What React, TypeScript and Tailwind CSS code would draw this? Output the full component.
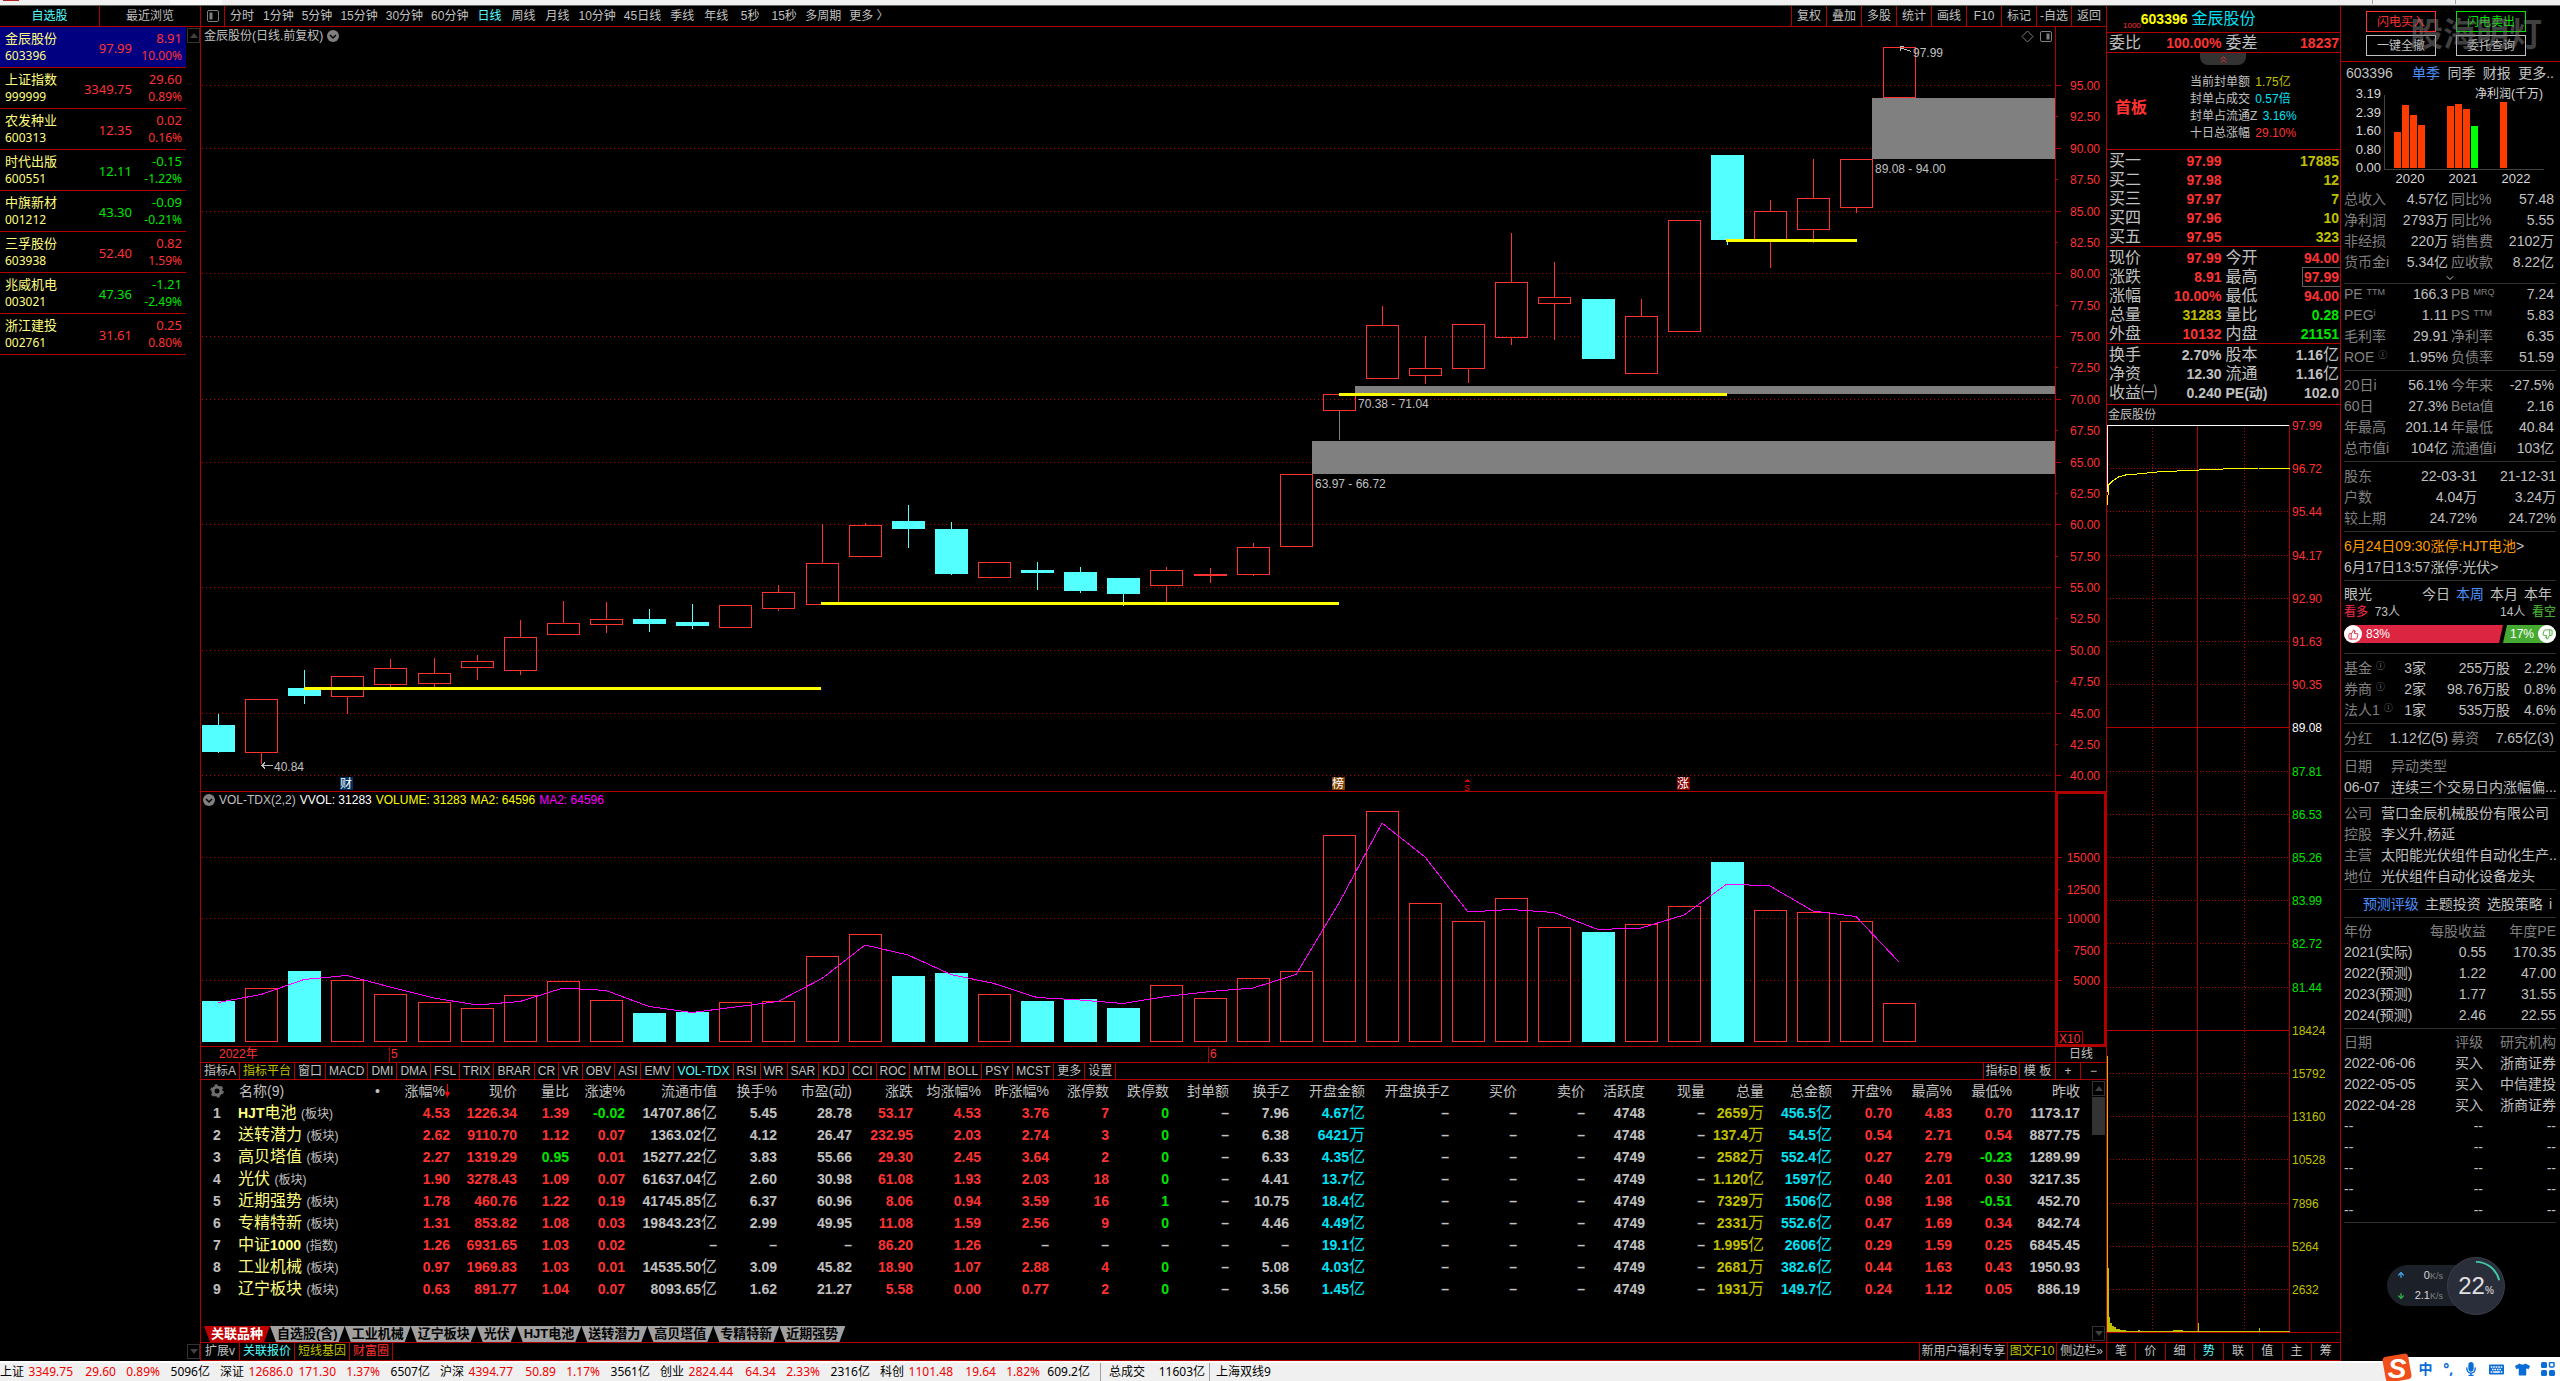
import { Fragment, type ReactNode } from 'react'
import clsx from 'clsx'
import { ThumbsUp, ThumbsDown, ChevronDown, ChevronsUp, ArrowUp, ArrowDown } from 'lucide-react'
import { FaKeyboard, FaMicrophone, FaTshirt } from 'react-icons/fa'

const RED = 'text-[#ff3232]'
const GREEN = 'text-[#00e600]'
const CYAN = 'text-[#02e2f4]'
const GOLD = 'text-[#c0c000]'
const GRAY = 'text-[#c0c0c0]'

/* ---------- data ---------- */

const WATCHLIST = [
  ['金辰股份', '603396', '97.99', '8.91', '10.00%'],
  ['上证指数', '999999', '3349.75', '29.60', '0.89%'],
  ['农发种业', '600313', '12.35', '0.02', '0.16%'],
  ['时代出版', '600551', '12.11', '-0.15', '-1.22%'],
  ['中旗新材', '001212', '43.30', '-0.09', '-0.21%'],
  ['三孚股份', '603938', '52.40', '0.82', '1.59%'],
  ['兆威机电', '003021', '47.36', '-1.21', '-2.49%'],
  ['浙江建投', '002761', '31.61', '0.25', '0.80%'],
]

const PERIODS = [
  '分时', '1分钟', '5分钟', '15分钟', '30分钟', '60分钟', '日线', '周线', '月线',
  '10分钟', '45日线', '季线', '年线', '5秒', '15秒', '多周期', '更多 〉',
]

const TOOLS = ['复权', '叠加', '多股', '统计', '画线', 'F10', '标记', '-自选', '返回']

// [rising, body top, body bottom, high, low, volume top]
const CANDLES: [boolean, number, number, number, number, number][] = [
  [false, 725, 752, 714, 753, 1001],
  [true, 699, 752, 699, 764, 988],
  [false, 688, 696, 670, 704, 971],
  [true, 676, 696, 676, 714, 980],
  [true, 668, 684, 659, 687, 994],
  [true, 673, 683, 658, 687, 1002],
  [true, 661, 667, 655, 680, 1008],
  [true, 637, 670, 620, 675, 995],
  [true, 623, 634, 601, 635, 981],
  [true, 619, 624, 602, 633, 1000],
  [false, 619, 624, 609, 632, 1013],
  [false, 622, 626, 604, 629, 1012],
  [true, 605, 627, 605, 627, 1002],
  [true, 592, 608, 585, 611, 1001],
  [true, 563, 604, 524, 605, 956],
  [true, 525, 556, 523, 557, 934],
  [false, 521, 529, 505, 548, 976],
  [false, 529, 574, 522, 575, 973],
  [true, 562, 577, 562, 578, 994],
  [false, 570, 573, 562, 590, 1001],
  [false, 572, 591, 567, 593, 999],
  [false, 578, 594, 578, 606, 1008],
  [true, 570, 585, 567, 603, 985],
  [true, 574, 575, 568, 583, 998],
  [true, 547, 574, 543, 576, 978],
  [true, 474, 546, 474, 546, 971],
  [true, 394, 410, 394, 440, 835],
  [true, 325, 378, 306, 378, 811],
  [true, 368, 375, 336, 384, 903],
  [true, 324, 368, 324, 383, 921],
  [true, 282, 337, 233, 345, 898],
  [true, 297, 303, 262, 340, 927],
  [false, 299, 359, 299, 359, 932],
  [true, 316, 373, 299, 373, 924],
  [true, 220, 331, 220, 332, 906],
  [false, 155, 240, 155, 245, 862],
  [true, 211, 240, 200, 268, 910],
  [true, 198, 229, 159, 243, 912],
  [true, 159, 207, 159, 213, 921],
  [true, 47, 97, 47, 97, 1003],
]

const candleX = (i: number) => Math.round(218 + i * 43.11)
const priceY = (p: number) => Math.round(85 + (95 - p) * 12.55)

const PRICE_TICKS = Array.from({ length: 23 }, (_, i) => 95 - i * 2.5)
const VOLUME_TICKS: [string, number][] = [
  ['15000', 857], ['12500', 889], ['10000', 918], ['7500', 950], ['5000', 980],
]

const SUPPORT_LINES = [
  [304, 821, 688],
  [821, 1339, 603],
  [1339, 1727, 394],
  [1726, 1857, 240],
]

const GAPS: [number, number, number, string][] = [
  [1872, 98, 159, '89.08 - 94.00'],
  [1355, 386, 394, '70.38 - 71.04'],
  [1312, 441, 474, '63.97 - 66.72'],
]

const INDICATORS = [
  '指标A', '指标平台', '窗口', 'MACD', 'DMI', 'DMA', 'FSL', 'TRIX', 'BRAR', 'CR', 'VR', 'OBV', 'ASI', 'EMV',
  'VOL-TDX', 'RSI', 'WR', 'SAR', 'KDJ', 'CCI', 'ROC', 'MTM', 'BOLL', 'PSY', 'MCST', '更多', '设置',
]

const COLUMNS: [string, string, string][] = [
  ['涨幅%', 'w-[70px]', 'sign'],
  ['现价', 'w-[67px]', 'red'],
  ['量比', 'w-[52px]', 'ratio'],
  ['涨速%', 'w-[56px]', 'sign'],
  ['流通市值', 'w-[92px]', 'gray'],
  ['换手%', 'w-[60px]', 'gray'],
  ['市盈(动)', 'w-[75px]', 'gray'],
  ['涨跌', 'w-[61px]', 'sign'],
  ['均涨幅%', 'w-[68px]', 'sign'],
  ['昨涨幅%', 'w-[68px]', 'sign'],
  ['涨停数', 'w-[60px]', 'red'],
  ['跌停数', 'w-[60px]', 'green'],
  ['封单额', 'w-[60px]', 'gray'],
  ['换手Z', 'w-[60px]', 'gray'],
  ['开盘金额', 'w-[76px]', 'cyan'],
  ['开盘换手Z', 'w-[84px]', 'gray'],
  ['买价', 'w-[68px]', 'gray'],
  ['卖价', 'w-[68px]', 'gray'],
  ['活跃度', 'w-[60px]', 'gray'],
  ['现量', 'w-[60px]', 'gray'],
  ['总量', 'w-[59px]', 'gold'],
  ['总金额', 'w-[68px]', 'cyan'],
  ['开盘%', 'w-[60px]', 'sign'],
  ['最高%', 'w-[60px]', 'sign'],
  ['最低%', 'w-[60px]', 'sign'],
  ['昨收', 'w-[68px]', 'gray'],
]

const SECTORS: [string, string, string][] = [
  ['HJT电池', '板块', '4.53 1226.34 1.39 -0.02 14707.86亿 5.45 28.78 53.17 4.53 3.76 7 0 – 7.96 4.67亿 – – – 4748 – 2659万 456.5亿 0.70 4.83 0.70 1173.17'],
  ['送转潜力', '板块', '2.62 9110.70 1.12 0.07 1363.02亿 4.12 26.47 232.95 2.03 2.74 3 0 – 6.38 6421万 – – – 4748 – 137.4万 54.5亿 0.54 2.71 0.54 8877.75'],
  ['高贝塔值', '板块', '2.27 1319.29 0.95 0.01 15277.22亿 3.83 55.66 29.30 2.45 3.64 2 0 – 6.33 4.35亿 – – – 4749 – 2582万 552.4亿 0.27 2.79 -0.23 1289.99'],
  ['光伏', '板块', '1.90 3278.43 1.09 0.07 61637.04亿 2.60 30.98 61.08 1.93 2.03 18 0 – 4.41 13.7亿 – – – 4749 – 1.120亿 1597亿 0.40 2.01 0.30 3217.35'],
  ['近期强势', '板块', '1.78 460.76 1.22 0.19 41745.85亿 6.37 60.96 8.06 0.94 3.59 16 1 – 10.75 18.4亿 – – – 4749 – 7329万 1506亿 0.98 1.98 -0.51 452.70'],
  ['专精特新', '板块', '1.31 853.82 1.08 0.03 19843.23亿 2.99 49.95 11.08 1.59 2.56 9 0 – 4.46 4.49亿 – – – 4749 – 2331万 552.6亿 0.47 1.69 0.34 842.74'],
  ['中证1000', '指数', '1.26 6931.65 1.03 0.02 – – – 86.20 1.26 – – – – – 19.1亿 – – – 4748 – 1.995亿 2606亿 0.29 1.59 0.25 6845.45'],
  ['工业机械', '板块', '0.97 1969.83 1.03 0.01 14535.50亿 3.09 45.82 18.90 1.07 2.88 4 0 – 5.08 4.03亿 – – – 4749 – 2681万 382.6亿 0.44 1.63 0.43 1950.93'],
  ['辽宁板块', '板块', '0.63 891.77 1.04 0.07 8093.65亿 1.62 21.27 5.58 0.00 0.77 2 0 – 3.56 1.45亿 – – – 4749 – 1931万 149.7亿 0.24 1.12 0.05 886.19'],
]

const GROUP_TABS = ['关联品种', '自选股(含)', '工业机械', '辽宁板块', '光伏', 'HJT电池', '送转潜力', '高贝塔值', '专精特新', '近期强势']

const INDICES = [
  ['上证', '3349.75', '29.60', '0.89%', '5096亿'],
  ['深证', '12686.0', '171.30', '1.37%', '6507亿'],
  ['沪深', '4394.77', '50.89', '1.17%', '3561亿'],
  ['创业', '2824.44', '64.34', '2.33%', '2316亿'],
  ['科创', '1101.48', '19.64', '1.82%', '609.2亿'],
]

const INTRADAY_LABELS = [
  '97.99', '96.72', '95.44', '94.17', '92.90', '91.63', '90.35', '89.08', '87.81', '86.53', '85.26',
  '83.99', '82.72', '81.44', '18424', '15792', '13160', '10528', '7896', '5264', '2632',
]

function toneOf(kind: string, value: string) {
  if (value === '–') return GRAY
  if (kind === 'sign') return value.startsWith('-') ? GREEN : RED
  if (kind === 'ratio') return Number(value) < 1 ? GREEN : RED
  if (kind === 'red') return RED
  if (kind === 'green') return GREEN
  if (kind === 'cyan') return CYAN
  if (kind === 'gold') return GOLD
  return GRAY
}

/* Digits are bold and small, the trailing unit is a full-size hanzi */
function Num({ value, className }: { value: string; className?: string }) {
  const unit = /[亿万]$/.test(value) ? value.slice(-1) : ''
  const digits = unit ? value.slice(0, -1) : value
  return (
    <span className={clsx('whitespace-nowrap', className)}>
      <span className="text-sm leading-4 font-bold">{digits}</span>
      {unit && <span className="text-base leading-4">{unit}</span>}
    </span>
  )
}

function ScrollArrow({ down = false }: { down?: boolean }) {
  return (
    <button aria-label={down ? '向下' : '向上'} className="flex h-[15px] w-[13px] items-center justify-center border border-[#333]">
      <svg width="8" height="5" viewBox="0 0 8 5" fill="#404040">
        <path d={down ? 'M0 0h8L4 5z' : 'M0 5h8L4 0z'} />
      </svg>
    </button>
  )
}

function RoundChevron() {
  return (
    <svg width="12" height="12" viewBox="0 0 12 12" fill="none">
      <circle cx="6" cy="6" r="6" fill="#808080" />
      <path d="M3 5l3 3 3-3" stroke="#000" strokeWidth="1.5" />
    </svg>
  )
}

/* ---------- left ---------- */

function Watchlist() {
  return (
    <aside className="flex w-[201px] shrink-0 flex-col border-r border-[#b00000]">
      <div className="flex h-[21px] border-b border-[#b00000] text-xs">
        <button className="w-[100px] border-r border-[#b00000] text-[#54ffff]">自选股</button>
        <button className="flex-1">最近浏览</button>
      </div>
      <div className="flex flex-1">
        <ul className="w-[186px] font-['Noto_Sans','Noto_Sans_CJK_SC',sans-serif]">
          {WATCHLIST.map(([name, code, price, diff, pct], i) => {
            const tone = diff.startsWith('-') ? GREEN : RED
            return (
              <li
                key={code}
                className={clsx('grid h-[41px] grid-cols-[65px_62px_1fr] items-center border-b border-[#b00000] pr-1 pl-[5px]', i === 0 && 'bg-[#000080]')}
              >
                <div className="text-[#ffff80]">
                  <div className="text-[13px] leading-[17px] whitespace-nowrap">{name}</div>
                  <div className="text-xs leading-[17px]">{code}</div>
                </div>
                <div className={clsx('pt-1 text-right text-[13px]', tone)}>{price}</div>
                <div className={clsx('text-right', tone)}>
                  <div className="text-[13px] leading-[17px]">{diff}</div>
                  <div className="text-xs leading-[17px]">{pct}</div>
                </div>
              </li>
            )
          })}
        </ul>
        <div className="flex flex-1 flex-col items-end justify-between pt-px pb-0.5">
          <ScrollArrow />
          <ScrollArrow down />
        </div>
      </div>
    </aside>
  )
}

/* ---------- centre ---------- */

function Toolbar() {
  return (
    <div className="flex h-[21px] items-stretch border-b border-[#b00000] text-xs">
      <button aria-label="侧栏" className="flex w-6 items-center justify-center border-r border-[#b00000]">
        <svg width="12" height="12" viewBox="0 0 12 12" fill="none" stroke="#808080">
          <rect x=".5" y=".5" width="11" height="11" rx="1.5" />
          <rect x="3" y="3" width="2" height="6" fill="#808080" />
        </svg>
      </button>
      <nav className="flex flex-1">
        {PERIODS.map((p) => (
          <button key={p} className={clsx('min-w-[34px] px-1 whitespace-nowrap', p === '日线' && 'text-[#54ffff]')}>
            {p}
          </button>
        ))}
      </nav>
      {TOOLS.map((t) => (
        <button key={t} className="w-[35px] border-l border-[#b00000] whitespace-nowrap">
          {t}
        </button>
      ))}
    </div>
  )
}

function Marker({ x, fill, label }: { x: number; fill: string; label: string }) {
  return (
    <g>
      <rect x={x} y="777" width="13" height="13" fill={fill} />
      <text x={x + 6} y="788" fill="#fff" fontSize="12" textAnchor="middle">{label}</text>
    </g>
  )
}

function PriceChart() {
  return (
    <div className="relative">
      <svg viewBox="201 27 1905 765" className="block h-auto w-full text-xs" shapeRendering="crispEdges">
        {PRICE_TICKS.map((p) => {
          const y = priceY(p)
          const major = p % 5 === 0
          return (
            <g key={p}>
              {major && <path d={`M202 ${y + 0.5}H2052`} stroke="#b00000" strokeDasharray="1 3" />}
              <path d={`M2056 ${y + 0.5}h${major ? 5 : 2}`} stroke="#b00000" />
              <text x="2100" y={y + 5} fill="#ff3232" fontSize="12" textAnchor="end">{p.toFixed(2)}</text>
            </g>
          )
        })}
        {GAPS.map(([x, top, bottom, label]) => (
          <g key={label}>
            <rect x={x} y={top} width={2055 - x} height={bottom - top} fill="#808080" />
            <text x={x + 3} y={bottom + 14} fill="#c0c0c0" fontSize="12">{label}</text>
          </g>
        ))}
        {CANDLES.map(([up, top, bottom, high, low], i) => {
          const cx = candleX(i)
          const color = up ? '#ff3232' : '#54ffff'
          return (
            <g key={i}>
              <rect x={cx} y={high} width="1" height={Math.max(top - high, 0)} fill={color} />
              <rect x={cx} y={bottom} width="1" height={Math.max(low - bottom, 0)} fill={i === 26 ? '#808080' : color} />
              {up ? (
                <rect x={cx - 15.5} y={top + 0.5} width="32" height={bottom - top} fill="none" stroke={color} />
              ) : (
                <rect x={cx - 16} y={top} width="33" height={bottom - top} fill={color} />
              )}
            </g>
          )
        })}
        {SUPPORT_LINES.map(([x1, x2, y]) => (
          <rect key={x1} x={x1} y={y - 1} width={x2 - x1} height="3" fill="#ff0" />
        ))}
        <path d="M1911 51.5l-11-4M1904 46.5h-4v4" fill="none" stroke="#c0c0c0" />
        <text x="1913" y="57" fill="#c0c0c0" fontSize="12">97.99</text>
        <path d="M273 765.5h-11M265 762.5l-3 3 3 3" fill="none" stroke="#c0c0c0" />
        <text x="274" y="771" fill="#c0c0c0" fontSize="12">40.84</text>
        <Marker x={340} fill="#003060" label="财" />
        <Marker x={1332} fill="#804000" label="榜" />
        <Marker x={1677} fill="#800000" label="涨" />
        <path d="M1464 782l3-3 3 3z" fill="#e00000" />
        <text x="1467" y="791" fill="#e00000" fontSize="11" textAnchor="middle">s</text>
        <path d="M2055.5 27V792M201 791.5H2106" stroke="#b00000" />
        <g fill="none" stroke="#808080" shapeRendering="auto">
          <path d="M2027.5 31l5.5 5.5-5.5 5.5-5.5-5.5z" />
          <rect x="2040.5" y="31.5" width="11" height="10" rx="1.5" />
          <rect x="2047" y="34" width="2" height="5" fill="#808080" />
        </g>
      </svg>
      <h1 className="absolute top-px left-[3px] flex items-center gap-1 text-xs leading-4">
        金辰股份(日线.前复权)
        <RoundChevron />
      </h1>
    </div>
  )
}

function VolumeChart() {
  const ma = CANDLES.map((c, i) => {
    const prev = i === 0 ? 1004 : CANDLES[i - 1][5]
    return `${candleX(i)},${(c[5] + prev) / 2}`
  }).join(' ')
  return (
    <div className="relative">
      <svg viewBox="201 792 1905 255" className="block h-auto w-full" shapeRendering="crispEdges">
        {VOLUME_TICKS.map(([label, y], i) => (
          <g key={label}>
            {i % 2 === 0 && <path d={`M202 ${y + 0.5}H2052`} stroke="#b00000" strokeDasharray="1 3" />}
            <path d={`M2058 ${y + 0.5}h${i % 2 === 0 ? 4 : 2}`} stroke="#b00000" />
            <text x="2100" y={y + 5} fill="#ff3232" fontSize="12" textAnchor="end">{label}</text>
          </g>
        ))}
        {CANDLES.map((c, i) =>
          c[0] ? (
            <rect key={i} x={candleX(i) - 15.5} y={c[5] + 0.5} width="32" height={1041 - c[5]} fill="none" stroke="#ff3232" />
          ) : (
            <rect key={i} x={candleX(i) - 16} y={c[5]} width="33" height={1042 - c[5]} fill="#54ffff" />
          ),
        )}
        <polyline points={ma} fill="none" stroke="#f0f" />
        <path d="M2055.5 792V1046M201 1046.5H2106" stroke="#b00000" />
        <rect x="2057" y="793" width="48" height="252" fill="none" stroke="#b00000" strokeWidth="2" />
        <path d="M2057 1031.5h25v14" fill="none" stroke="#b00000" />
        <text x="2059" y="1043" fill="#ff3232" fontSize="12">X10</text>
      </svg>
      <div className="absolute top-0 left-0.5 flex items-center gap-1 text-xs leading-4">
        <RoundChevron />
        <span>VOL-TDX(2,2)</span>
        <span className="text-white">VVOL: 31283</span>
        <span className="text-[#ff0]">VOLUME: 31283</span>
        <span className="text-[#ff0]">MA2: 64596</span>
        <span className="text-[#f0f]">MA2: 64596</span>
      </div>
    </div>
  )
}

function DateAxis() {
  return (
    <div className="flex h-4 border-b border-[#b00000] text-xs leading-[15px] text-[#ff3232]">
      <span className="w-[188px] pl-[18px]">2022年</span>
      <span className="w-[819px] border-l border-[#b00000] pl-px">5</span>
      <span className="flex-1 border-l border-[#b00000] pl-px">6</span>
      <span className="w-[51px] border-l border-[#b00000] text-center text-[#c0c0c0]">日线</span>
    </div>
  )
}

function IndicatorTabs() {
  return (
    <div className="flex h-[17px] border-b border-[#b00000] text-xs leading-4">
      {INDICATORS.map((name) => (
        <button
          key={name}
          className={clsx(
            'border-r border-[#b00000] px-[3px] whitespace-nowrap',
            name === '指标平台' && GOLD,
            name === 'VOL-TDX' && 'text-[#54ffff]',
          )}
        >
          {name}
        </button>
      ))}
      <div className="flex-1" />
      <button className="w-9 border-l border-[#b00000] whitespace-nowrap">指标B</button>
      <button className="w-9 border-l border-[#b00000] whitespace-nowrap">模 板</button>
      <button className="w-[25px] border-l border-[#b00000]">+</button>
      <button className="w-[26px] border-l border-[#b00000]">−</button>
    </div>
  )
}

function SectorTable() {
  return (
    <div className="flex h-[246px]">
      <table className="h-fit flex-1 table-fixed">
        <thead>
          <tr className="h-[22px] text-sm leading-4 whitespace-nowrap">
            <th className="w-8 font-normal">
              <svg width="14" height="14" viewBox="0 0 14 14" fill="none" stroke="#707070" className="mx-auto" role="img" aria-label="设置">
                <circle cx="7" cy="7" r="4" strokeWidth="3" />
                <circle cx="7" cy="7" r="6" strokeWidth="1.5" strokeDasharray="3 3.28" />
              </svg>
            </th>
            <th className="w-[147px] pl-1.5 text-left font-normal">
              <span className="flex justify-between">
                名称(9)<span>•</span>
              </span>
            </th>
            {COLUMNS.map(([label, width], i) => (
              <th key={label} className={clsx(width, 'text-right font-normal')}>
                {i === 0 ? (
                  <span className="flex items-center justify-end">
                    涨幅%
                    <svg width="5" height="14" viewBox="0 0 5 14">
                      <path d="M2 0h1v8h2l-2.500 6L0 8h2z" fill="#ff0000" />
                    </svg>
                  </span>
                ) : (
                  label
                )}
              </th>
            ))}
            <th />
          </tr>
        </thead>
        <tbody>
          {SECTORS.map(([name, kind, values], row) => (
            <tr key={name} className="h-[22px] leading-4 whitespace-nowrap">
              <td className={clsx('text-center text-sm font-bold', GRAY)}>{row + 1}</td>
              <td className="pl-[5px]">
                <span className="text-base leading-4 text-[#ffff80]">
                  {name.split(/([A-Z0-9]+)/).map((part, i) => (
                    <span key={i} className={clsx(/[A-Z0-9]/.test(part) && 'text-sm font-bold')}>{part}</span>
                  ))}
                </span>{' '}
                <span className="text-xs">({kind})</span>
              </td>
              {values.split(' ').map((v, i) => (
                <td key={i} className="text-right">
                  <Num value={v} className={toneOf(COLUMNS[i][2], v)} />
                </td>
              ))}
              <td />
            </tr>
          ))}
        </tbody>
      </table>
      <div className="flex w-3.5 flex-col items-start py-px">
        <ScrollArrow />
        <div className="mt-px h-[38px] w-[13px] bg-[#333]" />
      </div>
    </div>
  )
}

function GroupTabs() {
  return (
    <div className="flex h-[17px] items-start justify-between border-b border-[#b00000] pl-[3px]">
      <div className="flex">
        {GROUP_TABS.map((name, i) => (
          <button
            key={name}
            className={clsx(
              'h-4 px-[7px] text-[13px] leading-4 font-bold whitespace-nowrap [clip-path:polygon(0_0,100%_0,calc(100%-6px)_100%,6px_100%)]',
              i === 0 ? 'bg-[#c00000] text-white' : 'bg-[#a0a0a0] text-black',
            )}
          >
            {name}
          </button>
        ))}
      </div>
      <div className="w-3.5">
        <ScrollArrow down />
      </div>
    </div>
  )
}

function LinkBar() {
  return (
    <div className="flex h-[18px] border-b border-[#b00000] text-xs leading-[17px] whitespace-nowrap">
      <button className="border-r border-[#b00000] px-1">扩展v</button>
      <button className="border-r border-[#b00000] px-[3px] text-[#54ffff]">关联报价</button>
      <button className={clsx('border-r border-[#b00000] px-[3px]', GOLD)}>短线基因</button>
      <button className={clsx('border-r border-[#b00000] px-[3px]', RED)}>财富圈</button>
      <div className="flex-1" />
      <button className="w-[88px] border-l border-[#b00000]">新用户福利专享</button>
      <button className={clsx('w-[49px] border-l border-[#b00000]', GOLD)}>图文F10</button>
      <button className="w-[50px] border-l border-[#b00000]">侧边栏»</button>
    </div>
  )
}

/* ---------- quote column ---------- */

type Pair = [string, string, string, string?, string?, string?]

const BIDS: Pair[] = [
  ['买一', '97.99', RED, '', '17885', GOLD],
  ['买二', '97.98', RED, '', '12', GOLD],
  ['买三', '97.97', RED, '', '7', GOLD],
  ['买四', '97.96', RED, '', '10', GOLD],
  ['买五', '97.95', RED, '', '323', GOLD],
]
const QUOTE: Pair[] = [
  ['现价', '97.99', RED, '今开', '94.00', RED],
  ['涨跌', '8.91', RED, '最高', '97.99', RED],
  ['涨幅', '10.00%', RED, '最低', '94.00', RED],
  ['总量', '31283', GOLD, '量比', '0.28', GREEN],
  ['外盘', '10132', RED, '内盘', '21151', GREEN],
]
const CAPITAL: Pair[] = [
  ['换手', '2.70%', GRAY, '股本', '1.16亿', GRAY],
  ['净资', '12.30', GRAY, '流通', '1.16亿', GRAY],
  ['收益㈠', '0.240', GRAY, 'PE(动)', '102.0', GRAY],
]

function PairRow({ row: [a, av, at, b, bv = '', bt] }: { row: Pair }) {
  return (
    <div className="grid h-[19px] grid-cols-2 items-center text-base leading-[18px]">
      <div className="flex items-center justify-between px-0.5">
        <span>{a}</span>
        <Num value={av} className={at} />
      </div>
      <div className="flex items-center justify-between pl-0.5">
        <span className={clsx(b?.startsWith('PE') && 'text-sm font-bold')}>{b}</span>
        <Num value={bv} className={clsx(bt, 'px-px', b === '最高' && 'outline outline-[#606060]')} />
      </div>
    </div>
  )
}

const SEAL = [
  ['当前封单额', '1.75亿', GOLD],
  ['封单占成交', '0.57倍', CYAN],
  ['封单占流通Z', '3.16%', CYAN],
  ['十日总涨幅', '29.10%', RED],
]

function IntradayChart() {
  const step = 43.2
  const noise = [60, 34, 22, 18, 12, 9, 7, 8, 5, 4, 4, 3, 3, 2, 3, 5, 2, 1, 2, 1, 2, 1, 1, 2, 1, 3, 2, 2, 2]
  return (
    <svg viewBox="2107 425 233 917" className="block h-auto w-full overflow-visible" shapeRendering="crispEdges">
      {INTRADAY_LABELS.map((label, i) => {
        const y = Math.round(425 + i * step)
        const solid = i === 7 || i === 14
        const fill = i < 7 ? '#ff3232' : i === 7 ? '#fff' : i < 14 ? '#00e600' : '#c0c000'
        return (
          <g key={label}>
            {i > 0 && <path d={`M2107 ${y + 0.5}H2289`} stroke="#b00000" strokeDasharray={solid ? undefined : '1 2'} />}
            <text x="2292" y={y + 5} fill={fill} fontSize="12">{label}</text>
          </g>
        )
      })}
      <path d="M2152.500 425V1332M2244.500 425V1332" stroke="#b00000" strokeDasharray="1 2" />
      <path d="M2197.500 425V1332M2289.500 425V1332M2107 1332.500H2340" stroke="#b00000" />
      <path d="M2289 425.500H2107.500V492" fill="none" stroke="#fff" />
      <path d="M2107.500 505l1-20 4-4 6-4 7-2 12-1 20-2 20-1 22-1 24-1 35-1h31" fill="none" stroke="#ff0" />
      <path d="M2107.500 1056V1332M2108.500 1268V1332" stroke="#c0c000" />
      {noise.map((h, i) => (
        <rect key={i} x={2108 + i * 2} y={1332 - Math.ceil(h / 4)} width="2" height={Math.ceil(h / 4)} fill="#c0c000" />
      ))}
      <path d="M2107 1331.500H2290M2198.500 1323V1332M2259.500 1328V1332M2173 1330.500h10" stroke="#c0c000" />
    </svg>
  )
}

function QuotePanel() {
  return (
    <section className="flex w-[234px] shrink-0 flex-col border-l border-[#b00000]">
      <div className="flex h-[27px] items-center border-b border-[#b00000] pl-4 text-base">
        <span className={clsx('self-end text-[8px] leading-3', RED)}>1000</span>
        <span className="text-sm font-bold text-[#ffff00]">603396</span>
        <span className={clsx('pl-1', CYAN)}>金辰股份</span>
      </div>
      <div className="h-5 border-b border-[#b00000]">
        <PairRow row={['委比', '100.00%', RED, '委差', '18237', RED]} />
      </div>
      <div className="relative flex h-[97px] items-center border-b border-[#b00000] pt-[14px] pl-2">
        <button aria-label="收起" className="absolute top-0 left-[93px] flex h-3 w-[46px] items-center justify-center rounded-b-lg bg-[#333]">
          <ChevronsUp size={11} className={RED} />
        </button>
        <strong className={clsx('w-[75px] text-base', RED)}>首板</strong>
        <ul className="text-xs leading-[17px]">
          {SEAL.map(([label, value, tone]) => (
            <li key={label}>
              {label} <span className={clsx('pl-0.5', tone)}>{value}</span>
            </li>
          ))}
        </ul>
      </div>
      {[BIDS, QUOTE, CAPITAL].map((rows, i) => (
        <div key={i} className={clsx('border-b border-[#b00000] pt-px', i === 2 ? 'h-[61px]' : 'h-[97px]')}>
          {rows.map((row) => (
            <PairRow key={row[0]} row={row} />
          ))}
        </div>
      ))}
      <div className="h-5 pl-px text-xs leading-5">金辰股份</div>
      <IntradayChart />
      <div className="flex h-[19px] border-y border-[#b00000] text-xs leading-[17px]">
        {'笔价细势联值主筹'.split('').map((t) => (
          <button key={t} className={clsx('flex-1 border-r border-[#b00000] last:border-r-0', t === '势' && 'text-[#54ffff]')}>
            {t}
          </button>
        ))}
      </div>
    </section>
  )
}

/* ---------- fundamentals column ---------- */

function Section({ children, className = 'pt-1 pb-0.5' }: { children: ReactNode; className?: string }) {
  return <div className={clsx('mr-1 ml-[3px] border-b border-[#303030] text-sm leading-[21px] whitespace-nowrap', className)}>{children}</div>
}

function Metric({ row: [a, av, b, bv] }: { row: ReactNode[] }) {
  return (
    <div className="grid grid-cols-2">
      <div className="flex justify-between pr-0.5">
        <span className="text-[#808080]">{a}</span>
        <span>{av}</span>
      </div>
      <div className="flex justify-between pr-0.5 pl-px">
        <span className="text-[#808080]">{b}</span>
        <span>{bv}</span>
      </div>
    </div>
  )
}

const Sup = ({ children }: { children: ReactNode }) => <sup className="text-[9px] leading-none">{children}</sup>

const PROFIT_BARS: [number, number, string][] = [
  [2394, 132, '#ff3c00'], [2402, 105, '#ff3c00'], [2410, 115, '#ff3c00'], [2418, 125, '#ff3c00'],
  [2447, 106, '#ff3c00'], [2455, 104, '#ff3c00'], [2463, 109, '#ff3c00'], [2471, 126, '#00ff00'],
  [2500, 102, '#ff3c00'],
]

function ProfitChart() {
  return (
    <svg viewBox="2341 84 219 105" className="block h-auto w-full" shapeRendering="crispEdges" fontSize="13" fill="#d8d8d8">
      {['3.19', '2.39', '1.60', '0.80', '0.00'].map((t, i) => (
        <text key={t} x="2381" y={98 + Math.round(i * 18.6)} textAnchor="end">{t}</text>
      ))}
      <path d="M2384.500 95V169.500H2544" fill="none" stroke="#404040" />
      {PROFIT_BARS.map(([x, y, fill]) => (
        <rect key={x} x={x} y={y} width="7" height={168 - y} fill={fill} />
      ))}
      <text x="2410" y="183" textAnchor="middle">2020</text>
      <text x="2463" y="183" textAnchor="middle">2021</text>
      <text x="2516" y="183" textAnchor="middle">2022</text>
      <text x="2543" y="98" textAnchor="end" fontSize="12">净利润(千万)</text>
    </svg>
  )
}

function SpeedWidget() {
  return (
    <div className="absolute top-[1251px] left-[46px] h-[58px] w-[118px]">
      <div className="absolute top-2 left-0 flex h-[41px] w-[70px] flex-col justify-around rounded-l-full bg-[#1c2029] pr-3.5 pl-2.5 text-[11px] leading-4 text-[#d8d8d8]">
        <div className="flex items-center justify-between">
          <ArrowUp size={8} strokeWidth={4} className="text-[#3da5e8]" />
          <span>0<span className="text-[9px] text-[#808080]">K/s</span></span>
        </div>
        <div className="flex items-center justify-between">
          <ArrowDown size={8} strokeWidth={4} className="text-[#2fae46]" />
          <span>2.1<span className="text-[9px] text-[#808080]">K/s</span></span>
        </div>
      </div>
      <div className="absolute top-0 left-[60px] flex size-[58px] items-center justify-center rounded-full border border-[#3a3e4a] bg-[#2a2e3a] text-[#e0e0e0]">
        <svg viewBox="0 0 58 58" className="absolute inset-0" fill="none">
          <path d="M29 4a25 25 0 0 1 24 19" stroke="#3fc9a8" strokeWidth="2" />
        </svg>
        <span className="text-2xl leading-none">22</span>
        <span className="self-center pt-2 text-[10px]">%</span>
      </div>
    </div>
  )
}

const FORECAST = [
  ['2021(实际)', '0.55', '170.35'],
  ['2022(预测)', '1.22', '47.00'],
  ['2023(预测)', '1.77', '31.55'],
  ['2024(预测)', '2.46', '22.55'],
]
const RATINGS = [
  ['2022-06-06', '买入', '浙商证券'],
  ['2022-05-05', '买入', '中信建投'],
  ['2022-04-28', '买入', '浙商证券'],
  ...Array.from({ length: 5 }, () => ['--', '--', '--']),
]

function Fundamentals() {
  return (
    <section className="relative w-[220px] shrink-0 border-l border-[#b00000]">
      <div className="relative grid h-14 grid-cols-[70px_70px] gap-x-5 gap-y-[3px] border-b border-[#b00000] pt-[5px] pb-[5px] pl-[25px] text-xs">
        <button className="h-[21px] border border-[#ff3232] text-[#ff3232]">闪电买入</button>
        <button className="h-[21px] border border-[#00e600] text-[#00e600]">闪电卖出</button>
        <button className="h-[21px] border border-[#c0c0c0]">一键全撤</button>
        <button className="h-[21px] border border-[#c0c0c0]">委托查询</button>
        <span className="pointer-events-none absolute top-2 left-[69px] text-[33px] leading-[42px] font-bold whitespace-nowrap text-[#808080]/50">股海明灯</span>
      </div>
      <div className="flex h-[22px] items-center justify-between pr-1.5 pl-[5px] text-sm">
        <span className="pr-3">603396</span>
        <button className="text-[#4a90ff]">单季</button>
        <button>同季</button>
        <button>财报</button>
        <button>更多..</button>
      </div>
      <ProfitChart />
      <Section className="">
        <Metric row={['总收入', '4.57亿', '同比%', '57.48']} />
        <Metric row={['净利润', '2793万', '同比%', '5.55']} />
        <Metric row={['非经损', '220万', '销售费', '2102万']} />
        <Metric row={['货币金i', '5.34亿', '应收款', '8.22亿']} />
        <div className="flex h-2.5 items-center justify-center">
          <ChevronDown size={12} />
        </div>
      </Section>
      <Section className="pb-0.5">
        <Metric row={[<>PE <Sup>TTM</Sup></>, '166.3', <>PB <Sup>MRQ</Sup></>, '7.24']} />
        <Metric row={[<>PEG<Sup>i</Sup></>, '1.11', <>PS <Sup>TTM</Sup></>, '5.83']} />
        <Metric row={['毛利率', '29.91', '净利率', '6.35']} />
        <Metric row={[<>ROE <Sup>ⓘ</Sup></>, '1.95%', '负债率', '51.59']} />
      </Section>
      <Section>
        <Metric row={['20日i', '56.1%', '今年来', '-27.5%']} />
        <Metric row={['60日', '27.3%', 'Beta值', '2.16']} />
        <Metric row={['年最高', '201.14', '年最低', '40.84']} />
        <Metric row={['总市值i', '104亿', '流通值i', '103亿']} />
      </Section>
      <Section>
        {[['股东', '22-03-31', '21-12-31'], ['户数', '4.04万', '3.24万'], ['较上期', '24.72%', '24.72%']].map(([a, b, c]) => (
          <div key={a} className="grid grid-cols-[53px_80px_1fr] text-right">
            <span className="text-left text-[#808080]">{a}</span>
            <span>{b}</span>
            <span>{c}</span>
          </div>
        ))}
      </Section>
      <Section>
        <div><a href="#" className="text-[#ff9c00]">6月24日09:30涨停:HJT电池</a>&gt;</div>
        <div><a href="#">6月17日13:57涨停:光伏&gt;</a></div>
      </Section>
      <Section className="pt-[3px] pb-2.5">
        <div className="flex justify-between pr-1">
          <span>眼光</span>
          <span className="flex gap-1.5">
            <button>今日</button>
            <button className="text-[#4a90ff]">本周</button>
            <button>本月</button>
            <button>本年</button>
          </span>
        </div>
        <div className="flex justify-between text-xs leading-[14px]">
          <span><b className="font-medium text-[#dc2540]">看多</b>&nbsp; 73人</span>
          <span>14人&nbsp; <b className="font-medium text-[#46aa32]">看空</b></span>
        </div>
        <div className="mt-1.5 flex h-[18px] text-xs leading-[18px] font-medium text-white">
          <div className="flex flex-[3] items-center gap-1 rounded-l-full bg-[#dc2540] [clip-path:polygon(0_0,100%_0,calc(100%-4px)_100%,0_100%)]">
            <span className="flex size-[18px] items-center justify-center rounded-full bg-white text-[#dc2540]"><ThumbsUp size={11} /></span>
            83%
          </div>
          <div className="flex flex-1 items-center justify-end gap-1 rounded-r-full bg-[#46aa32] [clip-path:polygon(4px_0,100%_0,100%_100%,0_100%)]">
            17%
            <span className="flex size-[18px] items-center justify-center rounded-full bg-white text-[#46aa32]"><ThumbsDown size={11} /></span>
          </div>
        </div>
      </Section>
      <Section>
        {[['基金', '3家', '255万股', '2.2%'], ['券商', '2家', '98.76万股', '0.8%'], ['法人1', '1家', '535万股', '4.6%']].map(([a, b, c, d]) => (
          <div key={a} className="grid grid-cols-[50px_32px_84px_1fr] text-right">
            <span className="text-left text-[#808080]">{a} <Sup>ⓘ</Sup></span>
            <span>{b}</span>
            <span>{c}</span>
            <span>{d}</span>
          </div>
        ))}
      </Section>
      <Section>
        <Metric row={['分红', '1.12亿(5)', '募资', '7.65亿(3)']} />
      </Section>
      <Section className="pt-1">
        <div className="grid grid-cols-[47px_1fr] text-[#808080]"><span>日期</span><span>异动类型</span></div>
        <div className="grid grid-cols-[47px_1fr]"><span>06-07</span><span>连续三个交易日内涨幅偏...</span></div>
      </Section>
      <Section>
        <dl className="grid grid-cols-[37px_1fr]">
          {[['公司', '营口金辰机械股份有限公司'], ['控股', '李义升,杨延'], ['主营', '太阳能光伏组件自动化生产..'], ['地位', '光伏组件自动化设备龙头']].map(([a, b]) => (
            <Fragment key={a}>
              <dt className="text-[#808080]">{a}</dt>
              <dd>{b}</dd>
            </Fragment>
          ))}
        </dl>
      </Section>
      <Section>
        <div className="flex justify-end gap-1.5 pr-1">
          <button className="text-[#4a90ff]">预测评级</button>
          <button>主题投资</button>
          <button>选股策略</button>
          <span>i</span>
        </div>
      </Section>
      <Section className="pt-[3px] pb-0.5">
        <table className="w-full table-fixed">
          <thead>
            <tr className="text-[#808080]">
              <th className="w-[76px] text-left font-normal">年份</th>
              <th className="w-[66px] text-right font-normal">每股收益</th>
              <th className="text-right font-normal">年度PE</th>
            </tr>
          </thead>
          <tbody>
            {FORECAST.map(([a, b, c]) => (
              <tr key={a}>
                <td>{a}</td>
                <td className="text-right">{b}</td>
                <td className="text-right">{c}</td>
              </tr>
            ))}
          </tbody>
        </table>
      </Section>
      <Section className="pt-[3px] pb-px">
        <table className="w-full table-fixed">
          <thead>
            <tr className="text-[#808080]">
              <th className="w-[76px] text-left font-normal">日期</th>
              <th className="w-[63px] text-right font-normal">评级</th>
              <th className="text-right font-normal">研究机构</th>
            </tr>
          </thead>
          <tbody>
            {RATINGS.map(([a, b, c], i) => (
              <tr key={i}>
                <td>{a}</td>
                <td className="text-right">{b}</td>
                <td className="text-right">{c}</td>
              </tr>
            ))}
          </tbody>
        </table>
      </Section>
      <SpeedWidget />
    </section>
  )
}

/* ---------- bottom ---------- */

function StatusBar() {
  return (
    <footer className="relative flex h-5 items-center border-t-2 border-white bg-[#f0f0f0] font-['Noto_Sans','Noto_Sans_CJK_SC',sans-serif] text-xs leading-[18px] whitespace-nowrap text-black">
      {INDICES.map(([name, price, diff, pct, amount]) => (
        <div key={name} className="grid w-[220px] grid-cols-[28px_45px_43px_44px_50px] text-right text-[#f00000]">
          <span className="text-left text-black">{name}</span>
          <span>{price}</span>
          <span>{diff}</span>
          <span>{pct}</span>
          <span className="text-black">{amount}</span>
        </div>
      ))}
      <div className="flex w-[109px] justify-between border-l border-[#a0a0a0] pr-1 pl-2">
        <span>总成交</span>
        <span>11603亿</span>
      </div>
      <span className="border-l border-[#a0a0a0] pl-1.5">上海双线9</span>
      <div className="absolute right-0 bottom-0 flex h-6 w-[175px] items-center justify-around bg-white pl-7 text-[#0a6cd6]">
        <svg viewBox="0 0 32 30" className="absolute -top-1 -left-1 h-[30px] w-8">
          <rect x="3" y="2" width="26" height="26" rx="4" fill="#f04e1a" transform="rotate(-10 16 15)" />
          <text x="16" y="25" fill="#fff" fontSize="28" fontWeight="bold" fontStyle="italic" textAnchor="middle" fontFamily="Liberation Sans">S</text>
        </svg>
        <span className="text-sm font-bold">中</span>
        <span className="text-sm font-bold">°,</span>
        <FaMicrophone size={14} />
        <FaKeyboard size={15} />
        <FaTshirt size={15} />
        <svg width="14" height="14" viewBox="0 0 14 14" fill="currentColor">
          <rect width="6" height="6" rx="1.500" />
          <rect x="8.500" y=".5" width="4.500" height="4.500" rx="1" fill="none" stroke="currentColor" strokeWidth="1.500" />
          <rect y="8" width="6" height="6" rx="1.500" />
          <rect x="8" y="8" width="6" height="6" rx="1.500" />
        </svg>
      </div>
    </footer>
  )
}

export default function App() {
  return (
    <div className="flex min-h-screen flex-col overflow-hidden bg-black font-['Liberation_Sans','Noto_Sans_CJK_SC',sans-serif] text-[#c0c0c0]">
      <header className="flex h-1.5 items-start border-b border-[#606860] bg-[#f0f0f0]">
        <span className="ml-[3px] h-px w-4 bg-[#b02020]" />
        <span className="ml-[151px] h-[5px] w-[52px] bg-[#fafafa]" />
        <span className="mr-[104px] ml-auto flex h-1 w-[84px] border-x border-[#a0a0a0]" />
      </header>
      <main className="flex flex-1">
        <Watchlist />
        <div className="flex min-w-0 flex-1 flex-col">
          <Toolbar />
          <PriceChart />
          <VolumeChart />
          <DateAxis />
          <IndicatorTabs />
          <SectorTable />
          <GroupTabs />
          <LinkBar />
        </div>
        <QuotePanel />
        <Fundamentals />
      </main>
      <StatusBar />
    </div>
  )
}
